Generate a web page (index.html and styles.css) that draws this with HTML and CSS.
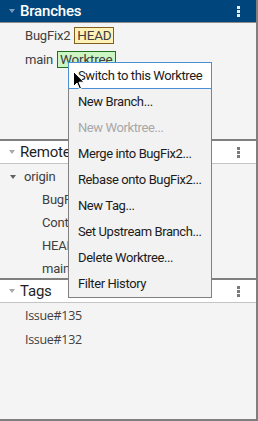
FILE: index.html
```html
<!DOCTYPE html>
<html lang="en">
<head>
    <meta charset="UTF-8">
    <title>Branches</title>
    <link rel="stylesheet" href="styles.css">
</head>
<body>
    <div class="panel">
        <!-- Branches -->
        <div class="section">
            <div class="section-header active">
                <span class="twisty"></span>
                <span class="section-title">Branches</span>
                <span class="kebab"><i></i><i></i><i></i></span>
            </div>
            <div class="section-body">
                <div class="row lvl1"><span>BugFix2</span><span class="badge head">HEAD</span></div>
                <div class="row lvl1"><span>main</span><span class="badge worktree">Worktree</span></div>
            </div>
        </div>

        <!-- Remotes -->
        <div class="section">
            <div class="section-header">
                <span class="twisty"></span>
                <span class="section-title">Remotes</span>
                <span class="kebab"><i></i><i></i><i></i></span>
            </div>
            <div class="section-body">
                <div class="row lvl0"><span class="twisty dark"></span>origin</div>
                <div class="row lvl2">BugFix2</div>
                <div class="row lvl2">Contribute</div>
                <div class="row lvl2">HEAD</div>
                <div class="row lvl2">main</div>
            </div>
        </div>

        <!-- Tags -->
        <div class="section last">
            <div class="section-header">
                <span class="twisty"></span>
                <span class="section-title">Tags</span>
                <span class="kebab"><i></i><i></i><i></i></span>
            </div>
            <div class="section-body">
                <div class="row lvl1 tag">Issue#135</div>
                <div class="row lvl1 tag">Issue#132</div>
            </div>
        </div>

        <!-- Context menu -->
        <ul class="context-menu">
            <li class="hover">Switch to this Worktree</li>
            <li>New Branch...</li>
            <li class="disabled">New Worktree...</li>
            <li>Merge into BugFix2...</li>
            <li>Rebase onto BugFix2...</li>
            <li>New Tag...</li>
            <li>Set Upstream Branch...</li>
            <li>Delete Worktree...</li>
            <li>Filter History</li>
        </ul>

        <svg class="pointer" width="12" height="19" viewBox="0 0 12 19">
            <path d="M0.5 0.5 L0.5 15.5 L4 12 L6.5 18 L8.5 17.2 L6 11.2 L11 11.2 Z" fill="#000" stroke="#fff" stroke-width="1"/>
        </svg>
    </div>
</body>
</html>
```

FILE: styles.css
```css
:root {
    --panel-bg: #f4f4f4;
    --header-blue: #00467c;
    --frame: #7f7f7f;
    --line: #c4c4c4;
    --text: #404040;
}

body {
    margin: 0;
    padding: 0;
    background: #ffffff;
    font-family: Roboto, 'Liberation Sans', sans-serif;
}

.panel {
    position: relative;
    box-sizing: border-box;
    width: 258px;
    height: 421px;
    border-right: 2px solid var(--frame);
    border-bottom: 2px solid var(--frame);
    background: var(--panel-bg);
    display: flex;
    flex-direction: column;
}

.section {
    height: 139px;
    display: flex;
    flex-direction: column;
    border-bottom: 2px solid var(--frame);
}

.section + .section {
    height: 137px;
}

.section.last {
    flex: 1;
    border-bottom: none;
}

.section-header {
    height: 22px;
    flex: none;
    display: flex;
    align-items: center;
    background: #ffffff;
    border-bottom: 1px solid var(--line);
    color: #1f1f1f;
    font-size: 15px;
}

.section-header.active {
    background: var(--header-blue);
    color: #ffffff;
    font-weight: 500;
    border-bottom-color: #8c8c8c;
}

.section-title {
    flex: 1;
    margin-left: 5px;
    letter-spacing: -0.2px;
}

.twisty {
    width: 0;
    height: 0;
    margin-left: 9px;
    border-left: 3.5px solid transparent;
    border-right: 3.5px solid transparent;
    border-top: 4px solid #a8a8a8;
}

.section-header.active .twisty {
    border-top-color: #7c9cbc;
}

.twisty.dark {
    margin-left: 10px;
    margin-right: 8px;
    border-top-color: #606060;
}

.kebab {
    display: flex;
    flex-direction: column;
    gap: 1px;
    margin-right: 16px;
}

.kebab i {
    width: 3px;
    height: 3px;
    background: #7a7a7a;
}

.section-header.active .kebab i {
    background: #e6ecf2;
}

.section-body {
    flex: 1;
    padding-top: 1px;
}

.row {
    height: 23px;
    display: flex;
    align-items: center;
    gap: 4px;
    color: var(--text);
    font-size: 13px;
    letter-spacing: -0.2px;
    white-space: nowrap;
}

.section-body .row:first-child + .row.lvl1 {
    height: 24px;
}

.row.lvl0 {
    gap: 0;
}

.row.lvl1 {
    padding-left: 25px;
}

.row.lvl2 {
    padding-left: 42px;
}

.row.tag {
    font-family: 'Open Sans', sans-serif;
    font-size: 12.5px;
    letter-spacing: -0.3px;
}

.badge {
    padding: 0 2px;
    line-height: 15px;
    font-size: 13.5px;
}

.badge.head {
    background: #fff2b8;
    border: 1px solid #806020;
}

.badge.worktree {
    background: #ccf5c4;
    border: 1px solid #207020;
}

.context-menu {
    position: absolute;
    left: 68px;
    top: 62px;
    width: 144px;
    margin: 0;
    padding: 0;
    list-style: none;
    box-sizing: border-box;
    background: #f2f2f2;
    border: 1px solid #808080;
    font-family: Roboto, 'Liberation Sans', sans-serif;
    font-size: 13px;
    letter-spacing: -0.4px;
    color: #1c1c1c;
}

.context-menu li {
    height: 26px;
    line-height: 26px;
    padding-left: 9px;
    white-space: nowrap;
}

.context-menu li.hover {
    margin: -1px -1px 0;
    height: 25px;
    line-height: 25px;
    background: #ffffff;
    border: 1px solid #4a90d6;
}

.context-menu li.disabled {
    color: #a8a8a8;
}

.pointer {
    position: absolute;
    left: 73px;
    top: 71px;
}
```
